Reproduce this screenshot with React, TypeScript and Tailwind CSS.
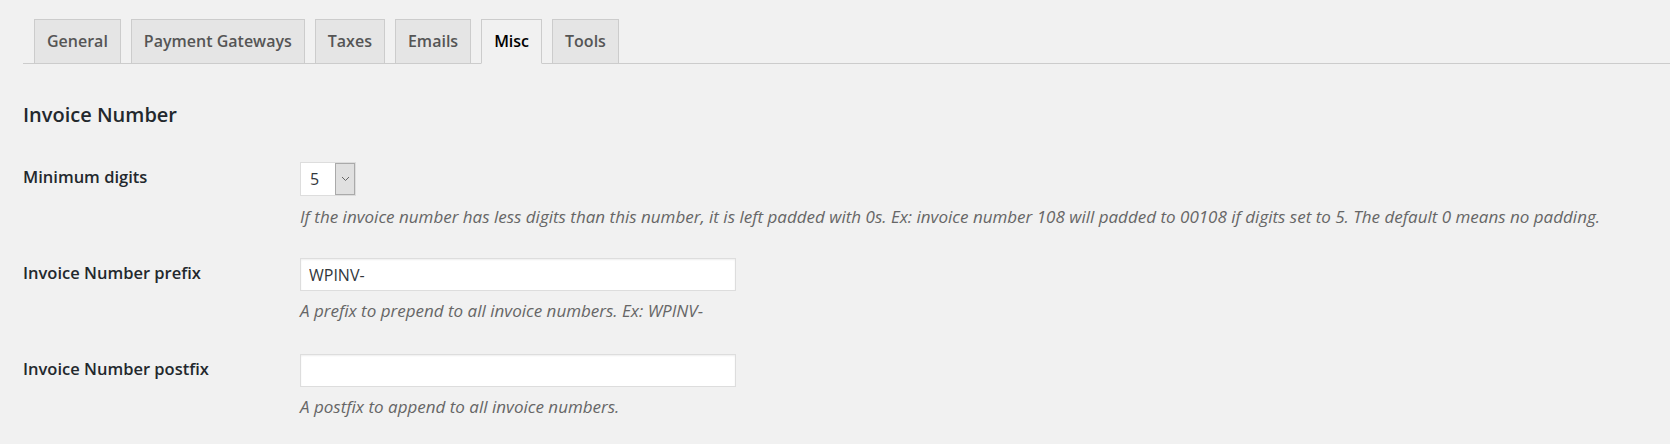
import React from 'react';

const tabs = ['General', 'Payment Gateways', 'Taxes', 'Emails', 'Misc', 'Tools'];

const font = { fontFamily: '"Open Sans", "Noto Sans", sans-serif' };

const labelClass = "w-[277px] shrink-0 text-[16.5px] font-semibold text-[#23282d] leading-[22px] pt-[4px]";
const descClass = "mt-[9px] text-[17px] italic text-[#666] leading-[22px]";
const inputClass = "h-[33px] w-[436px] border border-[#ddd] bg-white px-[8px] text-[16px] text-[#32373c] outline-none shadow-[inset_0_1px_2px_rgba(0,0,0,0.07)]";

const App: React.FC = () => {
  return (
    <div className="min-h-[444px] w-full bg-[#f1f1f1] pl-[23px] pt-[19px]" style={font}>
      {/* tabs */}
      <div className="flex items-end border-b border-[#ccc] pl-[11px] gap-[10px]">
        {tabs.map(t => (
          <div
            key={t}
            className={
              t === 'Misc'
                ? "-mb-px h-[45px] border border-[#ccc] border-b-[#f1f1f1] bg-[#f1f1f1] px-[12px] text-[16px] font-semibold leading-[43px] text-black"
                : "h-[44px] border border-b-0 border-[#ccc] bg-[#e5e5e5] px-[12px] text-[16px] font-semibold leading-[43px] text-[#555]"
            }
          >
            {t}
          </div>
        ))}
      </div>

      <h2 className="mt-[37px] text-[20px] font-semibold leading-[28px] text-[#23282d]">Invoice Number</h2>

      {/* Minimum digits */}
      <div className="mt-[33px] flex">
        <div className={labelClass}>Minimum digits</div>
        <div>
          <div className="flex h-[34px] w-[56px] border border-[#ddd] bg-white">
            <span className="flex-1 pl-[9px] text-[16px] leading-[32px] text-[#32373c]">5</span>
            <span className="flex w-[20px] items-center justify-center border border-[#aaa] bg-[#e0e0e0]">
              <svg width="9" height="6" viewBox="0 0 9 6" fill="none">
                <path d="M1 1l3.5 3.5L8 1" stroke="#666" strokeWidth="1" />
              </svg>
            </span>
          </div>
          <p className="mt-[10px] text-[17px] italic text-[#666] leading-[22px]">
            If the invoice number has less digits than this number, it is left padded with 0s. Ex: invoice number 108 will padded to 00108 if digits set to 5. The default 0 means no padding.
          </p>
        </div>
      </div>

      {/* prefix */}
      <div className="mt-[30px] flex">
        <div className={labelClass}>Invoice Number prefix</div>
        <div>
          <input className={inputClass} defaultValue="WPINV-" style={font} />
          <p className={descClass}>A prefix to prepend to all invoice numbers. Ex: WPINV-</p>
        </div>
      </div>

      {/* postfix */}
      <div className="mt-[32px] flex">
        <div className={labelClass}>Invoice Number postfix</div>
        <div>
          <input className={inputClass} defaultValue="" style={font} />
          <p className={descClass}>A postfix to append to all invoice numbers.</p>
        </div>
      </div>
    </div>
  );
};

export default App;
